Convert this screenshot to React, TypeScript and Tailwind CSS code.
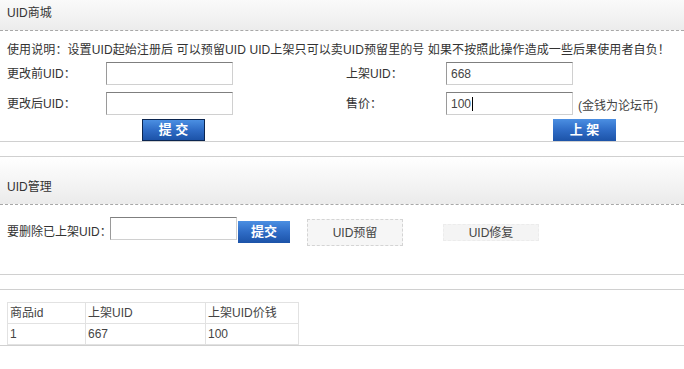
import React from "react";

const font = { fontFamily: '"Liberation Sans", "Noto Sans CJK SC", sans-serif' };

const inputCls =
  "h-[23px] w-[127px] border border-t-[#7f7f7f] border-l-[#9a9a9a] border-r-[#d0d0d0] border-b-[#d0d0d0] bg-white px-[4px] text-[12px] text-[#444] outline-none";

const blueBtn =
  "flex h-[22px] items-center justify-center bg-gradient-to-b from-[#4b8fe2] via-[#2f6cc6] to-[#1c53a8] text-[13px] font-bold text-white";

export default function App() {
  return (
    <div className="w-[684px] bg-white text-[12px] leading-[14px] text-[#333]" style={font}>
      {/* UID商城 */}
      <div className="border-b border-[#d0d0d0]">
        <div className="h-[31px] border-b border-dashed border-[#a8a8a8] bg-gradient-to-b from-[#fafafa] to-[#ececec] pl-[7px] pt-[6px]">
          UID商城
        </div>
        <div className="mt-[12px] whitespace-nowrap pl-[7px] tracking-[0.1px]">
          使用说明：设置UID起始注册后 可以预留UID UID上架只可以卖UID预留里的号 如果不按照此操作造成一些后果使用者自负！
        </div>
        <div className="mt-[5px] grid grid-cols-[106px_240px_100px_1fr] gap-y-[7px]">
          <div className="flex items-center pl-[7px]">更改前UID：</div>
          <div>
            <input className={inputCls} readOnly />
          </div>
          <div className="flex items-center">上架UID：</div>
          <div>
            <input className={inputCls} defaultValue="668" readOnly />
          </div>

          <div className="flex items-center pl-[7px]">更改后UID：</div>
          <div>
            <input className={inputCls} readOnly />
          </div>
          <div className="flex items-center">售价：</div>
          <div className="flex items-end gap-[5px]">
            <div className="relative">
              <input className={inputCls} defaultValue="100" readOnly />
              <span className="absolute left-[26px] top-[5px] h-[14px] w-px bg-black" />
            </div>
            <span className="pb-[2px] text-[#444]">(金钱为论坛币)</span>
          </div>
        </div>
        <div className="mt-[4px] grid grid-cols-[106px_240px_100px_1fr]">
          <div />
          <div>
            <button className={`${blueBtn} ml-[36px] w-[63px] border border-[#0b2550]`}>提 交</button>
          </div>
          <div />
          <div>
            <button className={`${blueBtn} ml-[107px] w-[63px]`}>上 架</button>
          </div>
        </div>
      </div>

      {/* UID管理 */}
      <div className="mt-[14px] border-y border-[#d0d0d0] pb-[28px]">
        <div className="h-[48px] border-b border-dashed border-[#a8a8a8] bg-gradient-to-b from-white to-[#ebebeb] pl-[7px] pt-[23px]">
          UID管理
        </div>
        <div className="mt-[12px] flex items-start pl-[7px]">
          <div className="mt-[8px] w-[103px] whitespace-nowrap">要删除已上架UID：</div>
          <input className={inputCls} readOnly />
          <button className={`${blueBtn} ml-px mt-[4px] w-[52px]`}>提交</button>
          <div className="ml-[17px] mt-[2px] flex h-[27px] w-[96px] items-center justify-center border border-dashed border-[#d4d4d4] bg-[#f6f6f6] text-[#444]">
            UID预留
          </div>
          <div className="ml-[40px] mt-[7px] flex h-[17px] w-[96px] items-center justify-center border border-dashed border-[#ececec] bg-[#f4f4f4] text-[#444]">
            UID修复
          </div>
        </div>
      </div>

      {/* 列表 */}
      <div className="mt-[14px] border-y border-[#d0d0d0] pl-[7px] pt-[12px]">
        <table className="border-collapse text-[#444]">
          <tbody>
            <tr className="h-[21px]">
              <td className="w-[78px] border border-[#e2e2e2] pl-[2px]">商品id</td>
              <td className="w-[120px] border border-[#e2e2e2] pl-[2px]">上架UID</td>
              <td className="w-[93px] border border-[#e2e2e2] pl-[2px]">上架UID价钱</td>
            </tr>
            <tr className="h-[21px]">
              <td className="border border-[#e2e2e2] pl-[2px]">1</td>
              <td className="border border-[#e2e2e2] pl-[2px]">667</td>
              <td className="border border-[#e2e2e2] pl-[2px]">100</td>
            </tr>
          </tbody>
        </table>
      </div>
    </div>
  );
}
